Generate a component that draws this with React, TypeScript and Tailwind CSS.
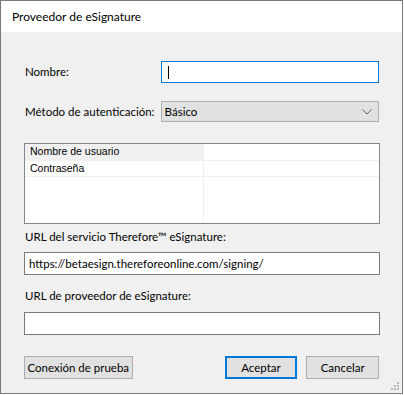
import React from "react";

const ui = { fontFamily: 'Lato, "Liberation Sans", sans-serif' };
const grid = { fontFamily: '"Liberation Sans", Arial, sans-serif' };

function Btn({ children, primary, className }: { children: React.ReactNode; primary?: boolean; className?: string }) {
  return (
    <button
      className={
        "h-[23px] bg-[#e1e1e1] text-[11.5px] text-black flex items-center justify-center whitespace-nowrap " +
        (primary ? "border-2 border-[#0078d7] " : "border border-[#adadad] ") +
        (className ?? "")
      }
    >
      {children}
    </button>
  );
}

export default function App() {
  return (
    <div className="w-[404px] h-[395px] bg-white whitespace-nowrap" style={ui}>
      <div className="w-[403px] h-[394px] border border-[#7a7a7a] flex flex-col bg-[#f0f0f0] relative">
        {/* title bar */}
        <div className="h-[31px] bg-white flex items-center pl-[11px] text-[12px] text-black shrink-0">
          Proveedor de eSignature
        </div>

        <div className="flex flex-col px-[23px] text-[11.5px] text-black">
          {/* nombre */}
          <div className="flex items-center mt-[29px] h-[22px]">
            <span className="w-[137px] pl-px">Nombre:</span>
            <div className="w-[219px] h-[22px] bg-white border border-[#0078d7] flex items-center pl-[6px]">
              <div className="w-px h-[13px] bg-black" />
            </div>
          </div>

          {/* metodo */}
          <div className="flex items-center mt-[18px] h-[21px]">
            <span className="w-[137px] pl-px">Método de autenticación:</span>
            <div className="w-[219px] h-[21px] bg-[#e1e1e1] border border-[#adadad] flex items-center justify-between pl-[3px] pr-[6px]">
              <span>Básico</span>
              <svg width="10" height="6" viewBox="0 0 10 6" fill="none">
                <path d="M0.5 0.5 L5 5 L9.5 0.5" stroke="#606060" strokeWidth="1" />
              </svg>
            </div>
          </div>

          {/* grid */}
          <div className="mt-[21px] w-[356px] h-[81px] bg-white border border-[#828790] flex flex-col text-[10.5px]" style={grid}>
            <div className="flex h-[17px] border-b border-[#f0f0f0]">
              <div className="w-[178px] bg-[#f0f0f0] flex items-center pl-[5px]">Nombre de usuario</div>
              <div className="flex-1 border-l border-[#f0f0f0]" />
            </div>
            <div className="flex h-[16px] border-b border-[#f0f0f0]">
              <div className="w-[178px] flex items-center pl-[5px]">Contraseña</div>
              <div className="flex-1 border-l border-[#f0f0f0]" />
            </div>
            <div className="flex flex-1">
              <div className="w-[178px]" />
              <div className="flex-1 border-l border-[#f0f0f0]" />
            </div>
          </div>

          {/* url servicio */}
          <div className="mt-[5px] h-[16px] flex items-center pl-px">URL del servicio Therefore™ eSignature:</div>
          <div className="mt-[7px] w-[356px] h-[23px] bg-white border border-[#7a7a7a] flex items-center pl-[4px]">
            https://betaesign.thereforeonline.com/signing/
          </div>

          {/* url proveedor */}
          <div className="mt-[13px] h-[16px] flex items-center pl-px">URL de proveedor de eSignature:</div>
          <div className="mt-[8px] w-[356px] h-[23px] bg-white border border-[#7a7a7a]" />

          {/* buttons */}
          <div className="mt-[21px] flex items-center">
            <Btn className="w-[109px]">Conexión de prueba</Btn>
            <Btn primary className="w-[73px] ml-[92px]">Aceptar</Btn>
            <Btn className="w-[73px] ml-[9px]">Cancelar</Btn>
          </div>
        </div>

        {/* resize grip */}
        <svg className="absolute right-[2px] bottom-[2px]" width="10" height="10" viewBox="0 0 10 10">
          <rect x="7" y="1" width="2" height="2" fill="#b8b8b8" />
          <rect x="4" y="4" width="2" height="2" fill="#b8b8b8" />
          <rect x="7" y="4" width="2" height="2" fill="#b8b8b8" />
          <rect x="1" y="7" width="2" height="2" fill="#b8b8b8" />
          <rect x="4" y="7" width="2" height="2" fill="#b8b8b8" />
          <rect x="7" y="7" width="2" height="2" fill="#b8b8b8" />
        </svg>
      </div>
    </div>
  );
}
